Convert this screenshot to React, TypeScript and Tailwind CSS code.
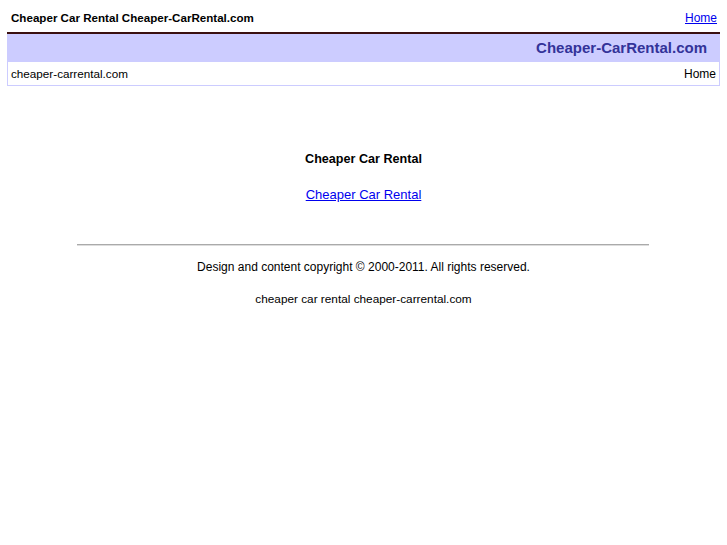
export default function App() {
  return (
    <div className="min-h-[545px] bg-white px-[7px] font-['Liberation_Sans',Arial,sans-serif] text-[12px] text-black">
      {/* top line */}
      <div className="flex h-[32px] items-center justify-between pl-[4px] pr-[3px] pt-[4px]">
        <span className="text-[11.6px] font-bold">Cheaper Car Rental Cheaper-CarRental.com</span>
        <a href="#" className="text-[#0000ee] underline">Home</a>
      </div>

      {/* header band */}
      <div className="border-t-2 border-[#3a1010] bg-[#ccccff] flex h-[30px] items-center justify-end pr-[13px]">
        <span className="text-[15px] font-bold text-[#333399]">Cheaper-CarRental.com</span>
      </div>
      <div className="flex h-[24px] items-center justify-between border border-t-0 border-[#ccccff] pl-[3px] pr-[3px]">
        <span className="text-[11.7px]">cheaper-carrental.com</span>
        <span>Home</span>
      </div>

      {/* content */}
      <div className="flex flex-col items-center pt-[66px]">
        <p className="text-[12.6px] font-bold leading-[14px]">Cheaper Car Rental</p>
        <a href="#" className="mt-[21px] text-[13px] leading-[15px] text-[#0000ee] underline">Cheaper Car Rental</a>
        <div className="mt-[42px] ml-[-2px] h-[2px] w-[572px] border-t border-[#aaaaaa] bg-[#dddddd]" />
        <p className="mt-[14px] leading-[14px]">Design and content copyright © 2000-2011. All rights reserved.</p>
        <p className="mt-[18px] text-[11.8px] leading-[14px]">cheaper car rental cheaper-carrental.com</p>
      </div>
    </div>
  );
}
